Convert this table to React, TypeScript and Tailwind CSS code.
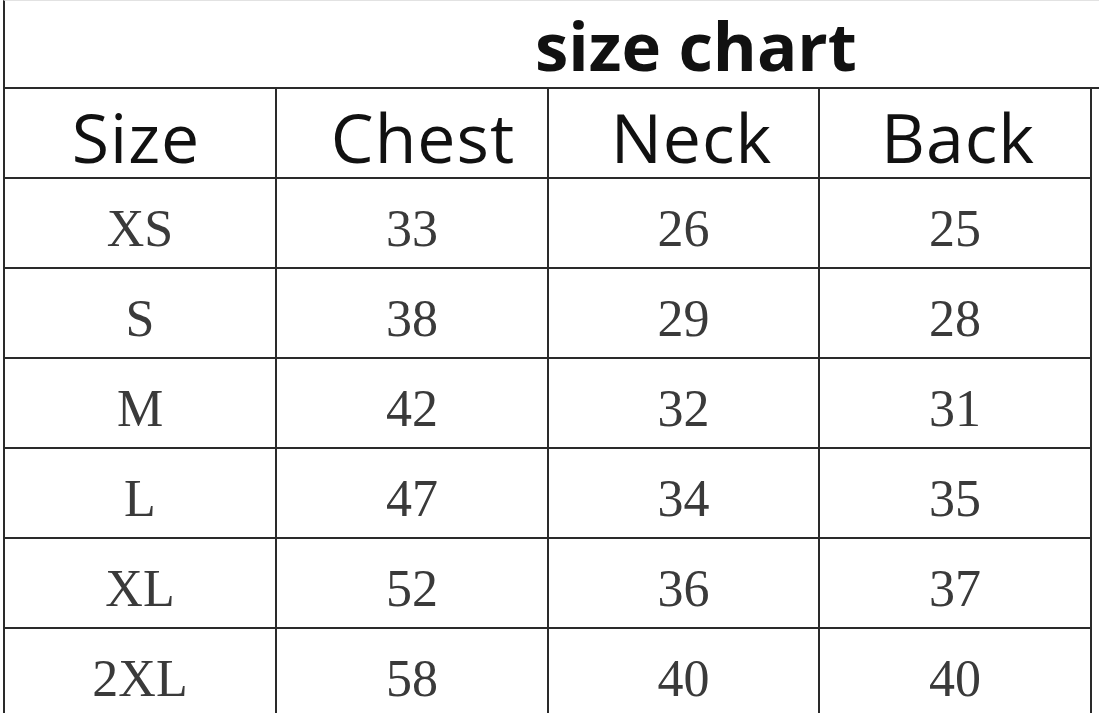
import React from 'react';

const columns = ['Size', 'Chest', 'Neck', 'Back'];

const rows: string[][] = [
  ['XS', '33', '26', '25'],
  ['S', '38', '29', '28'],
  ['M', '42', '32', '31'],
  ['L', '47', '34', '35'],
  ['XL', '52', '36', '37'],
  ['2XL', '58', '40', '40'],
];

const widths = ['w-[272px]', 'w-[272px]', 'w-[271px]', 'w-[272px]'];
// small nudges so the header words sit where the scan has them
const headPad = ['pr-[8px]', 'pl-[22px]', 'pl-[16px]', 'pl-[6px]'];

const App: React.FC = () => {
  return (
    <div className="w-[1099px] h-[713px] overflow-hidden bg-white pl-[3px]">
      {/* Title row */}
      <div className="flex items-center h-[89px] border-l-2 border-b-2 border-[#2a2a2a] border-t border-t-[#e2e2e2]">
        <div
          className="pl-[530px] pt-[2px] text-[67px] leading-[84px] font-bold text-[#111] whitespace-nowrap"
          style={{ fontFamily: '"Open Sans", "Noto Sans", sans-serif' }}
        >
          size chart
        </div>
      </div>

      <div className="border-l-2 border-[#2a2a2a] w-[1089px]">
        {/* Header row */}
        <div className="flex h-[90px]">
          {columns.map((c, i) => (
            <div
              key={c}
              className={`${widths[i]} ${headPad[i]} shrink-0 flex items-center justify-center border-r-2 border-b-2 border-[#2a2a2a] pt-[8px] text-[68px] tracking-[1px] text-[#111]`}
              style={{ fontFamily: '"Open Sans", "Noto Sans", sans-serif' }}
            >
              {c}
            </div>
          ))}
        </div>

        {/* Data rows */}
        {rows.map((r) => (
          <div key={r[0]} className="flex h-[90px]">
            {r.map((v, i) => (
              <div
                key={i}
                className={`${widths[i]} shrink-0 flex items-center justify-center border-r-2 border-b-2 border-[#2a2a2a] pt-[12px] text-[52px] text-[#3a3a3a]`}
                style={{ fontFamily: '"Liberation Serif", "DejaVu Serif", serif' }}
              >
                {v}
              </div>
            ))}
          </div>
        ))}
      </div>
    </div>
  );
};

export default App;
